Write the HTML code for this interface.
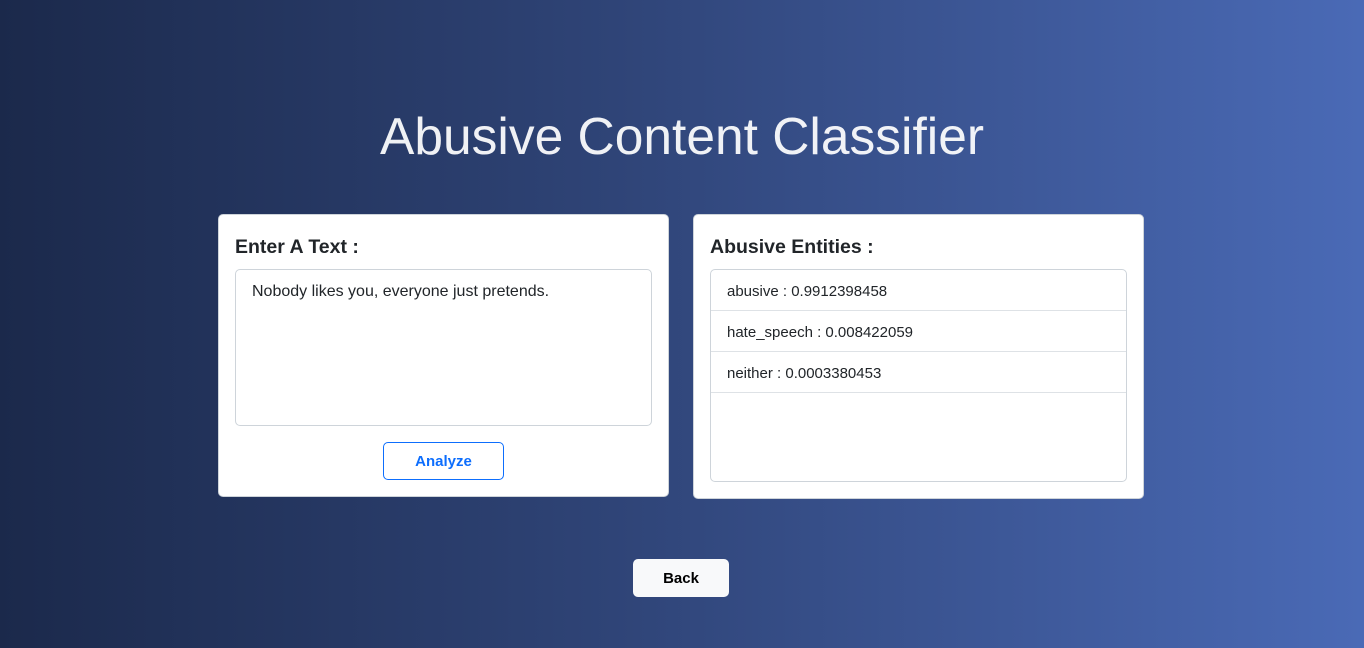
<!DOCTYPE html>
<html><head><meta charset="utf-8"><style>
*{box-sizing:border-box;margin:0;padding:0}
body{width:1364px;height:648px;overflow:hidden;background:linear-gradient(90deg,#1b294b 0%,#2f4477 45%,#4a6ab6 100%);font-family:"Liberation Sans",sans-serif;color:#212529;position:relative}
h1{position:absolute;left:0;width:1364px;top:104px;text-align:center;font-weight:normal;font-size:51.5px;color:rgba(255,255,255,0.93);line-height:64px}
.card{position:absolute;background:#fff;border:1px solid #ced4da;border-radius:5px}
.h{position:absolute;left:16px;top:21px;font-weight:bold;font-size:19.5px}
.ta{position:absolute;left:16px;top:54px;width:417px;height:157px;border:1px solid #ced4da;border-radius:5px;padding:13px 16px;font-size:16px}
.btn{position:absolute;left:164px;top:227px;width:121px;height:38px;border:1px solid #0d6efd;border-radius:5px;color:#0d6efd;font-weight:bold;font-size:15px;text-align:center;line-height:38px}
.list{position:absolute;left:16px;top:54px;width:417px;height:213px;border:1px solid #ced4da;border-radius:5px;overflow:hidden}
.row{height:41px;border-bottom:1px solid #dee2e6;padding:2px 16px 0;line-height:40px;font-size:15px}
.back{position:absolute;left:633px;top:559px;width:96px;height:38px;background:#f8f9fa;border-radius:5px;font-weight:bold;font-size:15px;text-align:center;line-height:40px;color:#000}
</style></head><body>
<h1>Abusive Content Classifier</h1>
<div class="card" style="left:218px;top:214px;width:451px;height:283px">
<div class="h">Enter A Text :</div>
<div class="ta">Nobody likes you, everyone just pretends.</div>
<div class="btn">Analyze</div>
</div>
<div class="card" style="left:693px;top:214px;width:451px;height:285px">
<div class="h">Abusive Entities :</div>
<div class="list">
<div class="row">abusive : 0.9912398458</div>
<div class="row">hate_speech : 0.008422059</div>
<div class="row">neither : 0.0003380453</div>
</div>
</div>
<div class="back">Back</div>
</body></html>
